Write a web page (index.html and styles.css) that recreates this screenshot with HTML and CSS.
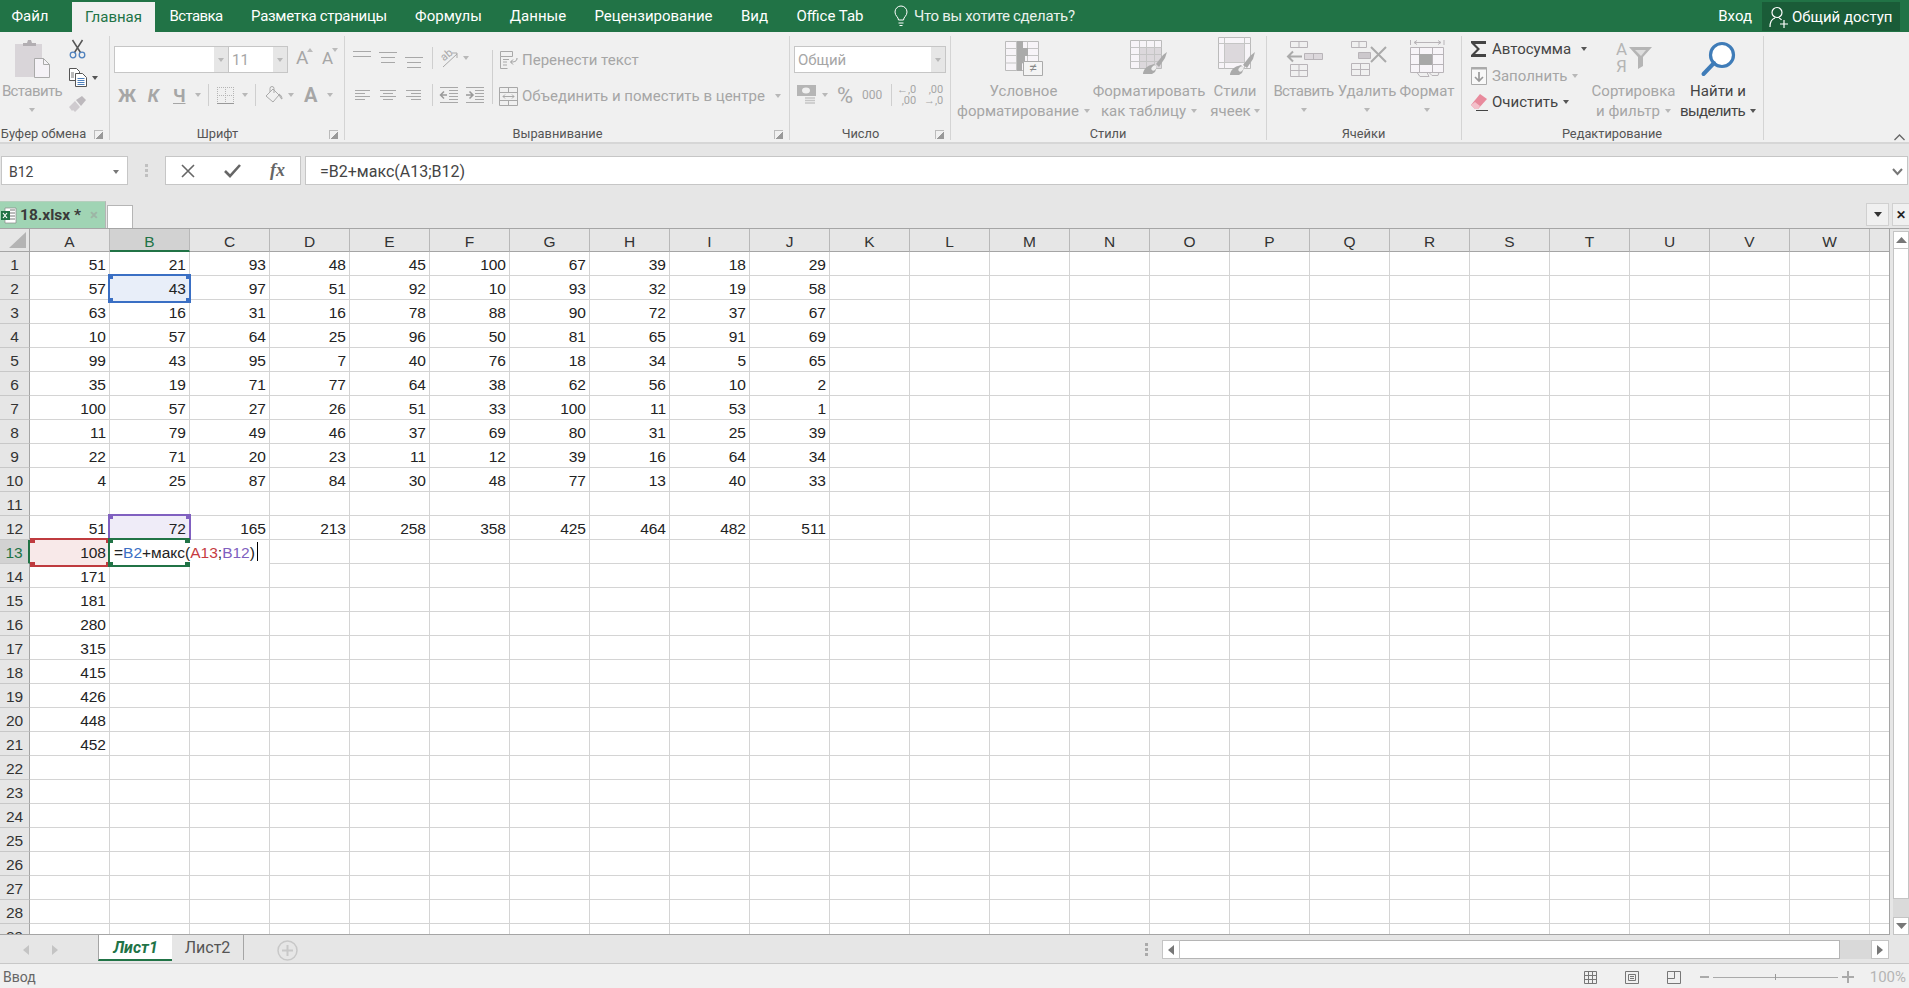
FILE: index.html
```html
<!DOCTYPE html>
<html lang="ru">
<head>
    <meta charset="UTF-8">
    <title>18.xlsx - Excel</title>
    <link rel="stylesheet" href="styles.css">
</head>
<body>
    <!-- top tabs -->
    <div class="titlebar">
        <div class="tabs">
            <div class="tab t-file">Файл</div>
            <div class="tab active">Главная</div>
            <div class="tab tight">Вставка</div>
            <div class="tab tight soft">Разметка страницы</div>
            <div class="tab">Формулы</div>
            <div class="tab">Данные</div>
            <div class="tab">Рецензирование</div>
            <div class="tab">Вид</div>
            <div class="tab">Office Tab</div>
        </div>
        <div class="tell">
            <svg width="14" height="21" viewBox="0 0 14 21" fill="none" stroke="#fff"><path d="M4.5 14c0-3-3.500-4-3.500-8a6 6 0 0 1 12 0c0 4-3.500 5-3.500 8z"/><path d="M4.500 17h5M5.500 19.500h3"/></svg>
            <span>Что вы хотите сделать?</span>
        </div>
        <div class="login">Вход</div>
        <div class="share">
            <svg width="20" height="22" viewBox="0 0 20 22" fill="none" stroke="#fff" stroke-width="1.200"><circle cx="8" cy="6.500" r="5"/><path d="M1 21c0-5 2-8 5-9M10 12c1 .3 2 1 2.500 2M11 18h8M15 14v8"/></svg>
            <span>Общий доступ</span>
        </div>
    </div>

    <!-- ribbon -->
    <div class="ribbon">
        <div class="grp g-clip">
            <div class="grp-body">
                <div class="big b-paste">
                    <div class="big-icon">
                        <svg width="35" height="38" viewBox="0 0 35 38"><rect x="0" y="4" width="27" height="33" fill="#d9d5d9"/><path d="M8 6V3h4l1-3h3l1 3h4v3z" fill="#b2aeb2"/><path d="M19.500 18.500h9l6 6v13h-15z" fill="#f5f2f7" stroke="#aaa"/><path d="M28.500 18.500v6h6" fill="none" stroke="#aaa"/></svg>
                    </div>
                    <div class="big-text off tight">Вставить</div>
                    <i class="caret low"></i>
                </div>
                <div class="clip-tools">
                    <svg width="17" height="19" viewBox="0 0 17 19" fill="none"><path d="M3.500 0l8 12.500M13.500 0l-8 12.500" stroke="#555" stroke-width="1.500"/><circle cx="4" cy="15" r="2.800" stroke="#4f81bd" stroke-width="1.300"/><circle cx="13" cy="15" r="2.800" stroke="#4f81bd" stroke-width="1.300"/></svg>
                    <div class="clip-copy">
                        <svg width="18" height="19" viewBox="0 0 18 19" fill="#fff" stroke="#555"><path d="M.5.5h7l3 3v9h-10z"/><path d="M6.500 5.500h7l4 4v9h-11z"/><path d="M8.500 10.500h7M8.500 12.500h7" stroke="#4f81bd"/><path d="M8.500 14.500h7M8.500 16.500h7" stroke="#4f81bd"/><path d="M2 5h3M2 7h3M2 9h3" stroke="#777"/></svg>
                        <i class="caret dark ml5"></i>
                    </div>
                    <svg width="18" height="17" viewBox="0 0 18 17"><path d="M0 11l6-6 5 6-5 5-2-2-1 1z" fill="#cfcbcf"/><path d="M7 4l6-4 4 4-5 6z" fill="#bdb9bd"/></svg>
                </div>
            </div>
            <div class="grp-label"><span>Буфер обмена</span><i class="launcher"></i></div>
        </div>

        <div class="grp g-font">
            <div class="grp-body col">
                <div class="r1 pl4">
                    <div class="combo c-name"><div class="combo-text"></div><div class="combo-btn"><i class="caret"></i></div></div>
                    <div class="combo c-size"><div class="combo-text off">11</div><div class="combo-btn"><i class="caret"></i></div></div>
                    <div class="a-size ml8"><span>A</span><svg width="6" height="4"><path d="M0 4h6L3 0z" fill="#bbb"/></svg></div>
                    <div class="a-size small ml9"><span>A</span><svg width="6" height="4"><path d="M0 0h6L3 4z" fill="#bbb"/></svg></div>
                </div>
                <div class="r2">
                    <span class="fmt w18 ml8">Ж</span>
                    <span class="fmt it w13 ml11">К</span>
                    <span class="fmt un w12 ml13">Ч</span>
                    <i class="caret ml10"></i>
                    <i class="sep ml7"></i>
                    <svg class="ml8" width="17" height="17" viewBox="0 0 17 17" fill="none" stroke="#b5b5b5" stroke-dasharray="1 1"><path d="M.5 0v17M8.500 0v17M16.500 0v17M0 .5h17M0 8.500h17"/><path d="M0 16.500h17" stroke-dasharray="none" stroke="#999"/></svg>
                    <i class="caret ml8"></i>
                    <i class="sep ml7"></i>
                    <svg class="ml9" width="18" height="18" viewBox="0 0 18 18" fill="none" stroke="#aaa"><path d="M1 10l7-7 6 6-6 7z"/><path d="M5 6V2.500a2 2 0 0 1 4 0V7"/><path d="M14 8c2 1 3 3 3 5-1 0-2-2-3-5z" fill="#ccc"/></svg>
                    <i class="caret ml5"></i>
                    <span class="fmt big-a w13 ml10">A</span>
                    <i class="caret ml10"></i>
                </div>
            </div>
            <div class="grp-label"><span>Шрифт</span><i class="launcher"></i></div>
        </div>

        <div class="grp g-align">
            <div class="grp-body">
                <div class="al-left">
                    <div class="r1">
                        <svg class="ml8 up8" width="18" height="8" viewBox="0 0 18 8" stroke="#a8a8a8"><path d="M0 .5h18M0 5.500h18"/></svg>
                        <svg class="ml8" width="18" height="12" viewBox="0 0 18 12" stroke="#a8a8a8"><path d="M0 .5h18M2 5.500h14M2 10.500h14"/></svg>
                        <svg class="ml8 low6" width="18" height="12" viewBox="0 0 18 12" stroke="#a8a8a8"><path d="M0 .5h18M2 5.500h14M2 10.500h14"/></svg>
                        <i class="sep ml9"></i>
                        <svg class="ml7" width="18" height="20" viewBox="0 0 18 20" fill="none" stroke="#a8a8a8"><text x="1" y="11" font-size="11" font-family="Roboto" fill="#a8a8a8" stroke="none" transform="rotate(-40 6 8)">ab</text><path d="M3 19L17 6M12 5h5v5"/></svg>
                        <i class="caret ml5"></i>
                    </div>
                    <div class="r2">
                        <svg class="ml10" width="15" height="10" viewBox="0 0 15 10" stroke="#a8a8a8"><path d="M0 .5h15M0 3.500h10M0 6.500h15M0 9.500h10"/></svg>
                        <svg class="ml10" width="16" height="10" viewBox="0 0 16 10" stroke="#a8a8a8"><path d="M0 .5h16M3 3.500h10M0 6.500h16M3 9.500h10"/></svg>
                        <svg class="ml10" width="15" height="10" viewBox="0 0 15 10" stroke="#a8a8a8"><path d="M0 .5h15M5 3.500h10M0 6.500h15M5 9.500h10"/></svg>
                        <i class="sep ml11"></i>
                        <svg class="ml7" width="18" height="16" viewBox="0 0 18 16" fill="none" stroke="#a8a8a8"><path d="M0 .5h18M9 3.500h9M9 6.500h9M9 9.500h9M9 12.500h9M0 15.500h18"/><path d="M7 8H1M4 4.500L.5 8 4 11.500" stroke="#999" stroke-width="1.500"/></svg>
                        <svg class="ml8" width="18" height="16" viewBox="0 0 18 16" fill="none" stroke="#a8a8a8"><path d="M0 .5h18M9 3.500h9M9 6.500h9M9 9.500h9M9 12.500h9M0 15.500h18"/><path d="M0 8h6M3.500 4.500L7 8l-3.500 3.500" stroke="#999" stroke-width="1.500"/></svg>
                    </div>
                </div>
                <i class="sep tall"></i>
                <div class="al-right">
                    <div class="r1 off wrap-row">
                        <svg class="ml7" width="18" height="18" viewBox="0 0 18 18" fill="none" stroke="#a8a8a8"><path d="M.5.5h12v5H.5zM.5 5.500v12h7M3 8.500h6M3 11h4M3 14h4"/><path d="M17 7c0 3-2 4-6 4M13 8.500L10.500 11l2.500 2.500" stroke="#999"/></svg>
                        <span class="ml4">Перенести текст</span>
                    </div>
                    <div class="r2 off merge-row">
                        <svg class="ml6" width="19" height="19" viewBox="0 0 19 19" fill="none" stroke="#a8a8a8"><path d="M.5.5h18v18H.5zM.5 5.500h18M.5 13.500h18M9.500.5v5M9.500 13.500v5"/><path d="M4 9.500h11M6 7.500l-2 2 2 2M13 7.500l2 2-2 2"/></svg>
                        <span class="ml4">Объединить и поместить в центре</span>
                        <i class="caret ml10"></i>
                    </div>
                </div>
            </div>
            <div class="grp-label"><span>Выравнивание</span><i class="launcher"></i></div>
        </div>

        <div class="grp g-num">
            <div class="grp-body col">
                <div class="r1 pl4">
                    <div class="combo c-num"><div class="combo-text off">Общий</div><div class="combo-btn"><i class="caret"></i></div></div>
                </div>
                <div class="r2">
                    <svg class="ml7" width="20" height="20" viewBox="0 0 20 20"><rect x="0" y="0" width="19" height="11" fill="#b5b5b5"/><ellipse cx="9" cy="5.500" rx="4" ry="3" fill="#f0f0f0"/><path d="M8 13h10M8 15.500h10M8 18h10" stroke="#c5c5c5" stroke-width="1.500"/></svg>
                    <i class="caret ml5"></i>
                    <span class="pct ml9">%</span>
                    <span class="thou ml10">000</span>
                    <i class="sep ml9"></i>
                    <span class="dec ml8"><span>←,0</span><span>,00</span></span>
                    <span class="dec ml11"><span>,00</span><span>→,0</span></span>
                </div>
            </div>
            <div class="grp-label"><span>Число</span><i class="launcher"></i></div>
        </div>

        <div class="grp g-styles">
            <div class="grp-body">
                <div class="big b-cond">
                    <div class="big-icon">
                        <svg width="38" height="35" viewBox="0 0 38 35" fill="none"><path d="M.5.500h33v29H.5z" fill="#f7f4f8" stroke="#bbb"/><path d="M.5 7.500h33M.5 14.500h33M.5 22h33M11.500.5v29M22.500.5v29" stroke="#c5c5c5"/><path d="M12 0h6v7h-6zM12 7h11v8H12zM12 15h8v7h-8zM12 22h5v8h-5z" fill="#aaa"/><path d="M18.500 20.500h19v14h-19z" fill="#f4f4f4" stroke="#aaa"/><text x="24" y="32" font-size="15" font-family="Roboto" fill="#888">≠</text></svg>
                    </div>
                    <div class="big-text off">Условное</div>
                    <div class="big-text off">форматирование<i class="caret ml5"></i></div>
                </div>
                <div class="big b-table">
                    <div class="big-icon">
                        <svg class="up1" width="38" height="35" viewBox="0 0 38 35" fill="none"><path d="M.5.500h31v28H.5z" fill="#f7f4f8" stroke="#bbb"/><path d="M9 7h22v21H9z" fill="#dcd8dc"/><path d="M.5 7.500h31M.5 14.500h31M.5 21.500h31M9.500.5v28M16.500.5v28M24.500.5v28" stroke="#c5c5c5"/><path d="M13 34c0-3 3-8 8-9l3-1 3 3-2 5-3 2z" fill="#aaa"/><path d="M26 24l7-9 4-3-2 6-6 9z" fill="#aaa"/><ellipse cx="24" cy="28" rx="3" ry="2" fill="#eee" transform="rotate(-45 24 28)"/></svg>
                    </div>
                    <div class="big-text off">Форматировать</div>
                    <div class="big-text off">как таблицу<i class="caret ml5"></i></div>
                </div>
                <div class="big b-cell">
                    <div class="big-icon">
                        <svg class="up3 ml3" width="38" height="38" viewBox="0 0 38 38" fill="none"><path d="M.5.500h32v31H.5z" fill="#f7f4f8" stroke="#bbb"/><path d="M6 7h21v18H6z" fill="#dcd8dc"/><path d="M.5 6.500h32M.5 25.500h32M6.500.5v31M26.500.5v31" stroke="#c5c5c5"/><path d="M12 38c0-3 3-8 8-9l3-1 3 3-2 5-3 2z" fill="#aaa"/><path d="M25 28l7-9 5-4-2 7-6 9z" fill="#aaa"/><ellipse cx="23" cy="32" rx="3" ry="2" fill="#eee" transform="rotate(-45 23 32)"/></svg>
                    </div>
                    <div class="big-text off">Стили</div>
                    <div class="big-text off">ячеек<i class="caret ml3"></i></div>
                </div>
            </div>
            <div class="grp-label"><span>Стили</span></div>
        </div>

        <div class="grp g-cells">
            <div class="grp-body">
                <div class="big b-ins">
                    <div class="big-icon">
                        <svg class="ml3" width="36" height="36" viewBox="0 0 36 36" fill="none" stroke="#b8b4b8"><path d="M3.500.5h17v6h-17zM12 .5v6M3.500 23.500h17v12h-17zM12 23.500v12M3.500 29.500h17"/><path d="M17.500 12.500h18v6h-18zM26.500 12.500v6" fill="#dcd8dc"/><path d="M15 15.500H1M6 10.500l-5 5 5 5" stroke="#aaa" stroke-width="2"/></svg>
                    </div>
                    <div class="big-text off tight">Вставить</div>
                    <i class="caret low"></i>
                </div>
                <div class="big b-del">
                    <div class="big-icon">
                        <svg class="ml3" width="36" height="36" viewBox="0 0 36 36" fill="none" stroke="#b8b4b8"><path d="M.5.500h15v6H.5zM8 .5v6M.5 22.500h18v12H.5zM9.500 22.500v12M.5 28.500h18"/><path d="M7.500 11.500h12v6h-12z" fill="#ccc8cc"/><path d="M20 6l15 15M35 6L20 21" stroke="#aaa" stroke-width="2"/></svg>
                    </div>
                    <div class="big-text off">Удалить</div>
                    <i class="caret low"></i>
                </div>
                <div class="big b-fmt">
                    <div class="big-icon">
                        <svg width="35" height="38" viewBox="0 0 35 38" fill="none" stroke="#b8b4b8"><path d="M.5 0v5M34 0v5M4 2.500h27M4 2.500l3-2M4 2.500l3 2M31 2.500l-3-2M31 2.500l-3 2"/><path d="M.5 7.500h33v25H.5z" fill="#f7f4f8"/><path d="M.5 14.500h33M.5 24.500h33M9.500 7.500v25M22.500 7.500v25"/><path d="M9 14h13v11H9z" fill="#a8a8a8" stroke="none"/><path d="M7 32.500l3 4h9l-2-4M19 32.500l3 3h6l1-3"/></svg>
                    </div>
                    <div class="big-text off">Формат</div>
                    <i class="caret low"></i>
                </div>
            </div>
            <div class="grp-label"><span>Ячейки</span></div>
        </div>

        <div class="grp g-edit">
            <div class="grp-body">
                <div class="edit-col">
                    <div class="edit-row">
                        <svg width="16" height="16" viewBox="0 0 16 16"><path d="M0 0h15v3H4l5 5-5 5h11v3H0v-2l6-6-6-6z" fill="#444"/></svg>
                        <span class="ml5">Автосумма</span><i class="caret dark ml10"></i>
                    </div>
                    <div class="edit-row off">
                        <svg width="16" height="18" viewBox="0 0 16 18" fill="none" stroke="#aaa"><path d="M.5.5h15v17H.5z" fill="#f8f8f8"/><path d="M0 1.500h16" stroke-width="2"/><path d="M8 5v9M4 10l4 4 4-4" stroke-width="1.700" stroke="#999"/></svg>
                        <span class="ml5">Заполнить</span><i class="caret ml4"></i>
                    </div>
                    <div class="edit-row">
                        <svg width="17" height="18" viewBox="0 0 17 18"><path d="M0 12L9 1l7 5-9 10H4z" fill="#e88a9c"/><path d="M0 12l4 4h3l2-3-5-4z" fill="#f3c0ca"/><path d="M5 17.500h12" stroke="#444"/></svg>
                        <span class="ml4">Очистить</span><i class="caret dark ml5"></i>
                    </div>
                </div>
                <div class="big b-sort">
                    <div class="big-icon">
                        <svg class="up2" width="36" height="32" viewBox="0 0 36 32"><text x="0" y="14" font-size="17" font-family="Roboto" fill="#b5b5b5">A</text><text x="0" y="31" font-size="17" font-family="Roboto" fill="#b5b5b5">Я</text><path d="M13 6h23l-9 10v9l-5 3V16z" fill="#b5b5b5"/><path d="M19 9h11l-5 6z" fill="#ddd"/></svg>
                    </div>
                    <div class="big-text off">Сортировка</div>
                    <div class="big-text off">и фильтр<i class="caret ml5"></i></div>
                </div>
                <div class="big b-find">
                    <div class="big-icon">
                        <svg width="35" height="36" viewBox="0 0 35 36" fill="none"><circle cx="21" cy="14" r="11.500" stroke="#3f7cb8" stroke-width="3.200" fill="#fff"/><path d="M2.500 33L13 22" stroke="#3f7cb8" stroke-width="4" stroke-linecap="round"/></svg>
                    </div>
                    <div class="big-text">Найти и</div>
                    <div class="big-text tight">выделить<i class="caret dark ml5"></i></div>
                </div>
            </div>
            <div class="grp-label"><span>Редактирование</span></div>
        </div>

        <div class="ribbon-end">
            <svg width="11" height="7" viewBox="0 0 11 7" fill="none" stroke="#666" stroke-width="1.300"><path d="M.5 6l5-5 5 5"/></svg>
        </div>
    </div>

    <div class="gapbar"></div>

    <!-- formula bar -->
    <div class="formula">
        <div class="namebox"><span>B12</span><i class="caret mid"></i></div>
        <div class="grip"><i></i><i></i><i></i></div>
        <div class="fx-tools">
            <svg width="14" height="14" viewBox="0 0 14 14" stroke="#666" stroke-width="1.600"><path d="M1 1l12 12M13 1L1 13"/></svg>
            <svg width="17" height="14" viewBox="0 0 17 14" fill="none" stroke="#666" stroke-width="2.600"><path d="M1 7l5 5L16 1"/></svg>
            <span class="fx">fx</span>
        </div>
        <div class="fx-input">
            <span>=B2+макс(A13;B12)</span>
            <svg width="11" height="8" viewBox="0 0 11 8" fill="none" stroke="#777" stroke-width="2"><path d="M1 1l4.500 5L10 1"/></svg>
        </div>
    </div>

    <!-- Office Tab strip -->
    <div class="docbar">
        <div class="doc-tab">
            <svg width="15" height="17" viewBox="0 0 15 17"><path d="M4 1h11v15H4z" fill="#fff" stroke="#888" stroke-width=".7"/><path d="M9 3h5M9 6h5M9 9h5M9 12h5" stroke="#777"/><rect x="0" y="4" width="9" height="9" fill="#217346"/><path d="M2 6l4 5M6 6l-4 5" stroke="#fff" stroke-width="1.200"/></svg>
            <span class="doc-name">18.xlsx *</span>
            <span class="doc-x">×</span>
        </div>
        <div class="doc-new"></div>
        <div class="doc-end">
            <div class="doc-btn"><i class="caret solid"></i></div>
            <div class="doc-btn narrow">✕</div>
        </div>
    </div>

    <!-- sheet -->
    <div class="sheet-wrap">
        <div class="sheet">
            <div class="head">
                <div class="corner"><svg width="17" height="16"><path d="M17 0v16H0z" fill="#b4b4b4"/></svg></div>
                <div>A</div><div class="hl">B</div><div>C</div><div>D</div><div>E</div><div>F</div><div>G</div><div>H</div><div>I</div><div>J</div><div>K</div><div>L</div><div>M</div><div>N</div><div>O</div><div>P</div><div>Q</div><div>R</div><div>S</div><div>T</div><div>U</div><div>V</div><div>W</div><div></div>
            </div>
            <div class="row"><div class="rh">1</div><div>51</div><div>21</div><div>93</div><div>48</div><div>45</div><div>100</div><div>67</div><div>39</div><div>18</div><div>29</div></div>
            <div class="row"><div class="rh">2</div><div>57</div><div class="ref blue">43<i></i></div><div>97</div><div>51</div><div>92</div><div>10</div><div>93</div><div>32</div><div>19</div><div>58</div></div>
            <div class="row"><div class="rh">3</div><div>63</div><div>16</div><div>31</div><div>16</div><div>78</div><div>88</div><div>90</div><div>72</div><div>37</div><div>67</div></div>
            <div class="row"><div class="rh">4</div><div>10</div><div>57</div><div>64</div><div>25</div><div>96</div><div>50</div><div>81</div><div>65</div><div>91</div><div>69</div></div>
            <div class="row"><div class="rh">5</div><div>99</div><div>43</div><div>95</div><div>7</div><div>40</div><div>76</div><div>18</div><div>34</div><div>5</div><div>65</div></div>
            <div class="row"><div class="rh">6</div><div>35</div><div>19</div><div>71</div><div>77</div><div>64</div><div>38</div><div>62</div><div>56</div><div>10</div><div>2</div></div>
            <div class="row"><div class="rh">7</div><div>100</div><div>57</div><div>27</div><div>26</div><div>51</div><div>33</div><div>100</div><div>11</div><div>53</div><div>1</div></div>
            <div class="row"><div class="rh">8</div><div>11</div><div>79</div><div>49</div><div>46</div><div>37</div><div>69</div><div>80</div><div>31</div><div>25</div><div>39</div></div>
            <div class="row"><div class="rh">9</div><div>22</div><div>71</div><div>20</div><div>23</div><div>11</div><div>12</div><div>39</div><div>16</div><div>64</div><div>34</div></div>
            <div class="row"><div class="rh">10</div><div>4</div><div>25</div><div>87</div><div>84</div><div>30</div><div>48</div><div>77</div><div>13</div><div>40</div><div>33</div></div>
            <div class="row"><div class="rh">11</div></div>
            <div class="row"><div class="rh">12</div><div>51</div><div class="ref purple">72<i></i></div><div>165</div><div>213</div><div>258</div><div>358</div><div>425</div><div>464</div><div>482</div><div>511</div></div>
            <div class="row"><div class="rh sel">13</div><div class="ref red">108<i></i></div><div class="edit-cell"><b class="ref-box"></b>=<span class="c-blue">B2</span>+макс(<span class="c-red">A13</span>;<span class="c-purple">B12</span>)<u class="cursor"></u></div></div>
            <div class="row"><div class="rh">14</div><div>171</div></div>
            <div class="row"><div class="rh">15</div><div>181</div></div>
            <div class="row"><div class="rh">16</div><div>280</div></div>
            <div class="row"><div class="rh">17</div><div>315</div></div>
            <div class="row"><div class="rh">18</div><div>415</div></div>
            <div class="row"><div class="rh">19</div><div>426</div></div>
            <div class="row"><div class="rh">20</div><div>448</div></div>
            <div class="row"><div class="rh">21</div><div>452</div></div>
            <div class="row"><div class="rh">22</div></div>
            <div class="row"><div class="rh">23</div></div>
            <div class="row"><div class="rh">24</div></div>
            <div class="row"><div class="rh">25</div></div>
            <div class="row"><div class="rh">26</div></div>
            <div class="row"><div class="rh">27</div></div>
            <div class="row"><div class="rh">28</div></div>
            <div class="row"><div class="rh">29</div></div>
        </div>
        <div class="vscroll">
            <div class="sb-btn"><svg width="11" height="6"><path d="M0 6h11L5.500 0z" fill="#777"/></svg></div>
            <div class="v-thumb"></div>
            <div class="v-track"></div>
            <div class="sb-btn"><svg width="11" height="6"><path d="M0 0h11L5.500 6z" fill="#777"/></svg></div>
        </div>
    </div>

    <!-- sheet tabs -->
    <div class="sheetbar">
        <div class="nav">
            <svg width="6" height="10"><path d="M6 0v10L0 5z" fill="#c4c4c4"/></svg>
            <svg width="6" height="10"><path d="M0 0v10l6-5z" fill="#c4c4c4"/></svg>
        </div>
        <div class="s-tab on">Лист1</div>
        <div class="s-tab">Лист2</div>
        <svg class="s-add" width="21" height="21" viewBox="0 0 21 21" fill="none" stroke="#c8c8c8" stroke-width="1.500"><circle cx="10.500" cy="10.500" r="9.500"/><path d="M10.500 5v11M5 10.500h11" stroke-width="2"/></svg>
        <div class="hscroll">
            <div class="h-dots"><i></i><i></i><i></i></div>
            <div class="sb-btn h"><svg width="6" height="10"><path d="M6 0v10L0 5z" fill="#777"/></svg></div>
            <div class="h-thumb"></div>
            <div class="h-track"></div>
            <div class="sb-btn h"><svg width="6" height="10"><path d="M0 0v10l6-5z" fill="#777"/></svg></div>
        </div>
    </div>

    <!-- status bar -->
    <div class="status">
        <span class="st-mode">Ввод</span>
        <div class="st-views">
            <svg width="13" height="13" viewBox="0 0 13 13" fill="none" stroke="#777"><path d="M.5.500h12v12H.5zM.5 4.500h12M.5 8.500h12M4.500.5v12M8.500.5v12"/></svg>
            <svg width="14" height="13" viewBox="0 0 14 13" fill="none" stroke="#777"><path d="M.5.500h13v12H.5zM3.500 3.500h7v6h-7zM5 5.500h4M5 7.500h4"/></svg>
            <svg width="14" height="13" viewBox="0 0 14 13" fill="none" stroke="#777"><path d="M.5.500h13v12H.5zM.5 7.500h7M7.500.5v7"/></svg>
        </div>
        <div class="st-zoom">
            <svg width="9" height="3"><path d="M0 0h9v2H0z" fill="#aaa"/></svg>
            <div class="slider"><i></i></div>
            <svg width="12" height="12" viewBox="0 0 12 12"><path d="M5 0h2v5h5v2H7v5H5V7H0V5h5z" fill="#aaa"/></svg>
            <span class="st-pct">100%</span>
        </div>
    </div>
</body>
</html>
```

FILE: styles.css
```css
html, body {
    margin: 0;
    padding: 0;
    height: 100%;
}
body {
    width: 1909px;
    height: 988px;
    overflow: hidden;
    display: flex;
    flex-direction: column;
    background-color: #e6e6e6;
    font-family: Roboto, "Liberation Sans", sans-serif;
    font-size: 15px;
    color: #444;
}
svg {
    display: block;
    flex: none;
    overflow: visible;
}
i, b, u {
    display: block;
    font-style: normal;
}

/* spacing helpers */
.ml3 { margin-left: 3px; }
.ml4 { margin-left: 4px; }
.ml5 { margin-left: 5px; }
.ml6 { margin-left: 6px; }
.ml7 { margin-left: 7px; }
.ml8 { margin-left: 8px; }
.ml9 { margin-left: 9px; }
.ml10 { margin-left: 10px; }
.ml11 { margin-left: 11px; }
.ml13 { margin-left: 13px; }
.pl4 { padding-left: 4px; }
.up1 { margin-top: -2px; }
.up2 { margin-top: -4px; }
.up3 { margin-top: -5px; }
.up8 { margin-top: -6px; }
.low6 { margin-top: 10px; }
.tight { letter-spacing: -.6px; }
.tight.soft { letter-spacing: -.3px; }

/* title bar */
.titlebar {
    flex: none;
    height: 32px;
    display: flex;
    background-color: #217346;
    color: #fff;
}
.tabs {
    display: grid;
    grid-template-columns: 72px 84px 82px 164px 95px 84px 147px 55px 96px;
}
.tab {
    margin-right: 2px;
    text-align: center;
    line-height: 33px;
    white-space: nowrap;
}
.t-file {
    margin-right: 12px;
}
.tab.active {
    margin-right: 1px;
    margin-top: 2px;
    line-height: 30px;
    background-color: #f0f0f0;
    color: #217346;
}
.tell {
    display: flex;
    align-items: center;
    margin-left: 15px;
    color: #e9f1ec;
}
.tell span {
    margin-left: 6px;
    letter-spacing: -.3px;
}
.login {
    margin-left: auto;
    line-height: 33px;
}
.share {
    display: flex;
    align-items: center;
    width: 138px;
    box-sizing: border-box;
    height: 29px;
    margin: 2px 9px 0 10px;
    padding-left: 7px;
    background-color: #1a5c38;
}
.share span {
    margin-left: 3px;
}

/* ribbon */
.ribbon {
    flex: none;
    height: 112px;
    box-sizing: border-box;
    padding-top: 4px;
    display: flex;
    align-items: flex-start;
    background-color: #f0f0f0;
    border-bottom: 2px solid #d6d6d6;
}
.grp {
    flex: none;
    height: 104px;
    box-sizing: border-box;
    border-right: 1px solid #d4d4d4;
}
.g-clip { width: 110px; }
.g-font { width: 235px; }
.g-align { width: 445px; }
.g-num { width: 161px; }
.g-styles { width: 316px; }
.g-cells { width: 195px; }
.g-edit { width: 302px; }
.grp-body {
    height: 88px;
    display: flex;
}
.grp-body.col {
    flex-direction: column;
}
.grp-label {
    height: 16px;
    line-height: 20px;
    font-size: 12.800px;
    display: flex;
    align-items: flex-start;
    color: #555;
    white-space: nowrap;
}
.grp-label span {
    flex: 1;
    text-align: center;
    margin-left: -1px;
}
.g-clip .grp-label span {
    margin-left: -4px;
}
.launcher {
    flex: none;
    width: 8px;
    height: 8px;
    margin: 6px 6px 0 3px;
    border-left: 1px solid #bbb;
    border-top: 1px solid #bbb;
    background: linear-gradient(135deg, transparent 55%, #999 55%);
}
.r1 {
    height: 44px;
    display: flex;
    align-items: center;
}
.r2 {
    height: 30px;
    display: flex;
    align-items: center;
}
.off {
    color: #a6a6a6;
}
.sep {
    flex: none;
    width: 1px;
    height: 22px;
    background-color: #cfcfcf;
}
.sep.tall {
    height: 54px;
    margin-top: 14px;
}
.caret {
    flex: none;
    width: 0;
    height: 0;
    border-left: 3.5px solid transparent;
    border-right: 3.5px solid transparent;
    border-top: 4px solid #b8b8b8;
}
.caret.dark {
    border-top-color: #555;
}
.caret.low {
    margin-top: 7px;
}
.caret.mid {
    border-top-color: #777;
}
.caret.solid {
    border-left-width: 4px;
    border-right-width: 4px;
    border-top: 5px solid #333;
}

/* big ribbon buttons */
.big {
    flex: none;
    display: flex;
    flex-direction: column;
    align-items: center;
}
.big-icon {
    height: 45px;
    display: flex;
    align-items: center;
}
.big-text {
    height: 20px;
    line-height: 20px;
    display: flex;
    align-items: center;
    white-space: nowrap;
}
.b-paste { width: 64px; }
.b-cond { width: 133px; margin-left: 6px; }
.b-table { width: 114px; margin-left: 2px; }
.b-cell { width: 54px; margin-left: 2px; }
.b-ins { width: 67px; margin-left: 3px; }
.b-del { width: 60px; }
.b-fmt { width: 60px; }
.b-sort { width: 97px; margin-left: -5px; }
.b-find { width: 72px; }

/* clipboard */
.clip-tools {
    margin: 4px 0 0 5px;
    display: flex;
    flex-direction: column;
    gap: 9px;
}
.clip-copy {
    display: flex;
    align-items: center;
    width: 30px;
}

/* combo boxes */
.combo {
    display: flex;
    height: 27px;
    box-sizing: border-box;
    background-color: #fff;
    border: 1px solid #c6c6c6;
    margin-top: 3px;
}
.combo-text {
    flex: 1;
    line-height: 27px;
    padding-left: 3px;
}
.combo-btn {
    width: 14px;
    display: flex;
    align-items: center;
    justify-content: center;
    background-color: #e6e6e6;
}
.c-name { width: 115px; }
.c-size { width: 60px; margin-left: -1px; }
.c-num { width: 152px; }
.a-size {
    display: flex;
    align-items: flex-start;
    width: 17px;
    color: #a6a6a6;
    font-size: 19px;
    line-height: 22px;
}
.a-size svg {
    margin-top: 1px;
    margin-left: -1px;
}
.a-size.small {
    font-size: 17px;
}

/* font buttons */
.fmt {
    flex: none;
    text-align: center;
    font-weight: 700;
    font-size: 18px;
    color: #a6a6a6;
}
.fmt.it { font-style: italic; }
.fmt.un { text-decoration: underline; }
.fmt.big-a { font-size: 20px; }
.w12 { width: 12px; }
.w13 { width: 13px; }
.w18 { width: 18px; }

/* alignment */
.al-left {
    flex: none;
    width: 147px;
}
.al-right .r1,
.al-right .r2 {
    white-space: nowrap;
}
.wrap-row {
    padding-top: 4px;
    box-sizing: border-box;
}
.merge-row {
    padding-top: 2px;
    box-sizing: border-box;
}

/* number */
.pct {
    font-size: 22px;
    color: #a6a6a6;
    width: 15px;
    text-align: center;
}
.thou {
    font-size: 12px;
    color: #a6a6a6;
}
.dec {
    display: flex;
    flex-direction: column;
    font-size: 11px;
    line-height: 11px;
    color: #a6a6a6;
    align-items: flex-end;
    width: 16px;
}

/* editing */
.edit-col {
    width: 119px;
    padding-left: 9px;
    flex: none;
    display: flex;
    flex-direction: column;
}
.edit-row {
    height: 26.500px;
    display: flex;
    align-items: center;
}
.ribbon-end {
    flex: 1;
    height: 105px;
    display: flex;
    align-items: flex-end;
    justify-content: flex-end;
    padding-right: 4px;
    box-sizing: border-box;
}

/* formula bar */
.gapbar {
    flex: none;
    height: 12px;
}
.formula {
    flex: none;
    height: 30px;
    box-sizing: border-box;
    padding-bottom: 1px;
    display: flex;
}
.namebox {
    width: 127px;
    margin-left: 1px;
    box-sizing: border-box;
    display: flex;
    align-items: center;
    justify-content: space-between;
    padding: 2px 8px 0 7px;
    font-size: 14px;
    background-color: #fff;
    border: 1px solid #c6c6c6;
}
.grip {
    width: 37px;
    display: flex;
    flex-direction: column;
    align-items: center;
    justify-content: center;
    gap: 2px;
}
.grip i {
    width: 3px;
    height: 3px;
    background-color: #c0c0c0;
}
.fx-tools {
    width: 136px;
    box-sizing: border-box;
    display: flex;
    align-items: center;
    justify-content: space-between;
    padding: 0 15px;
    background-color: #fff;
    border: 1px solid #c6c6c6;
}
.fx {
    font-family: "Liberation Serif", serif;
    font-style: italic;
    font-weight: 700;
    font-size: 18px;
    color: #666;
}
.fx-input {
    flex: 1;
    margin: 0 1px 0 4px;
    display: flex;
    align-items: center;
    justify-content: space-between;
    padding: 2px 4px 0 14px;
    font-size: 16px;
    background-color: #fff;
    border: 1px solid #c6c6c6;
}

/* document tabs */
.docbar {
    flex: none;
    height: 43px;
    box-sizing: border-box;
    border-bottom: 1px solid #a5a5a5;
    display: flex;
    align-items: flex-end;
}
.doc-tab {
    width: 106px;
    height: 27px;
    box-sizing: border-box;
    display: flex;
    align-items: center;
    padding-left: 1px;
    background-color: #a0d4b4;
    border-right: 1px solid #b5b5b5;
    border-top: 1px solid #b5cfbd;
}
.doc-name {
    margin-left: 4px;
    font-weight: 700;
    font-size: 15.500px;
    color: #3a3a3a;
}
.doc-x {
    margin-left: 9px;
    font-weight: 700;
    font-size: 15px;
    color: #9db5a5;
}
.doc-new {
    width: 26px;
    height: 23px;
    margin-left: 1px;
    box-sizing: border-box;
    background-color: #fff;
    border: 1px solid #b5b5b5;
    border-bottom: 0;
}
.doc-end {
    margin-left: auto;
    display: flex;
    gap: 3px;
    margin-bottom: 2px;
}
.doc-btn {
    width: 23px;
    height: 23px;
    box-sizing: border-box;
    display: flex;
    align-items: center;
    justify-content: center;
    background-color: #f0f0f0;
    border: 1px solid #d0d0d0;
    font-size: 12px;
    font-weight: 700;
    color: #222;
}
.doc-btn.narrow {
    width: 17px;
    border-right: 0;
}

/* sheet */
.sheet-wrap {
    flex: none;
    height: 706px;
    display: flex;
}
.sheet {
    width: 1889px;
    overflow: hidden;
    background-color: #fff;
    border-right: 1px solid #a5a5a5;
    border-bottom: 1px solid #a5a5a5;
    box-sizing: content-box;
    height: 705px;
}
.head,
.row {
    display: grid;
    grid-template-columns: 30px repeat(24, 80px);
    font-family: "Liberation Sans", sans-serif;
    font-size: 15.500px;
    color: #222;
}
.head {
    height: 23px;
    background-color: #e6e6e6;
    color: #333;
}
.head > div {
    box-sizing: border-box;
    height: 23px;
    line-height: 25px;
    text-align: center;
    border-right: 1px solid #b8b8b8;
    border-bottom: 1px solid #a5a5a5;
}
.head .corner {
    display: flex;
    align-items: flex-end;
    justify-content: flex-end;
    padding: 0 3px 3px 0;
    border-right: 1px solid #a5a5a5;
}
.head .hl {
    background-color: #d2d2d2;
    color: #217346;
    border-bottom: 2px solid #217346;
}
.row {
    height: 24px;
    box-sizing: border-box;
    line-height: 26px;
    border-bottom: 1px solid #d4d4d4;
    background-image: linear-gradient(90deg, transparent 79px, #d4d4d4 79px);
    background-size: 80px 100%;
    background-position: 30px 0;
}
.row > div {
    text-align: right;
    padding-right: 4px;
    position: relative;
}
.row > .rh {
    box-sizing: border-box;
    height: 24px;
    padding: 0;
    text-align: center;
    color: #333;
    background-color: #e6e6e6;
    border-right: 1px solid #a5a5a5;
    border-bottom: 1px solid #c8c8c8;
}
.row > .rh.sel {
    background-color: #d2d2d2;
    color: #217346;
    border-right: 2px solid #217346;
}

/* formula references */
.ref {
    z-index: 1;
}
.ref.blue { --c: #3a6fc4; background-color: #e8eef9; }
.ref.purple { --c: #8060c0; background-color: #efecf8; }
.ref.red { --c: #bf3b3f; background-color: #f8e9e9; }
.ref i,
.ref-box {
    position: absolute;
    left: -2px;
    right: -1px;
    top: -2px;
    bottom: -1px;
    border: 2px solid var(--c);
    pointer-events: none;
    background:
        linear-gradient(var(--c), var(--c)) 0 0 / 5px 5px no-repeat,
        linear-gradient(var(--c), var(--c)) 100% 0 / 5px 5px no-repeat,
        linear-gradient(var(--c), var(--c)) 0 100% / 5px 5px no-repeat,
        linear-gradient(var(--c), var(--c)) 100% 100% / 5px 5px no-repeat;
    background-origin: border-box;
    background-clip: border-box;
}
.ref.red i {
    left: 0;
    border-left: 0;
    border-right: 0;
}
.row > .edit-cell {
    --c: #217346;
    grid-column: span 2;
    text-align: left;
    padding: 0 0 0 4px;
    background-color: #fff;
    display: flex;
    white-space: pre;
    z-index: 2;
    margin-right: 1px;
}
.ref-box {
    right: 79px;
    border-right: 0;
}
.c-blue { color: #3a6fc4; }
.c-red { color: #c63b3f; }
.c-purple { color: #8060c0; }
.cursor {
    width: 1px;
    height: 19px;
    margin: 2px 0 0 2px;
    background-color: #000;
}

/* scrollbars */
.vscroll {
    width: 19px;
    display: flex;
    flex-direction: column;
    align-items: flex-end;
}
.sb-btn {
    flex: none;
    width: 16px;
    height: 18px;
    box-sizing: border-box;
    display: flex;
    align-items: center;
    justify-content: center;
    background-color: #fff;
    border: 1px solid #c4c4c4;
}
.vscroll .sb-btn:first-child {
    margin-top: 2px;
}
.v-thumb {
    width: 16px;
    height: 650px;
    box-sizing: border-box;
    background-color: #fff;
    border: 1px solid #c4c4c4;
    border-top: 0;
}
.v-track {
    flex: 1;
    width: 16px;
    background-color: #dadada;
}

/* sheet tabs */
.sheetbar {
    flex: none;
    height: 29px;
    box-sizing: border-box;
    border-bottom: 1px solid #c8c8c8;
    display: flex;
    align-items: flex-start;
}
.nav {
    width: 98px;
    box-sizing: border-box;
    padding: 10px 0 0 23px;
    display: flex;
    gap: 23px;
}
.s-tab {
    width: 72px;
    height: 25px;
    box-sizing: border-box;
    text-align: center;
    line-height: 26px;
    font-size: 16px;
    color: #555;
    border-right: 1px solid #a5a5a5;
}
.s-tab.on {
    width: 74px;
    height: 26px;
    background-color: #fff;
    color: #217346;
    font-weight: 700;
    font-style: italic;
    border: 0;
    border-left: 1px solid #a5a5a5;
    border-bottom: 2px solid #217346;
}
.s-add {
    margin: 5px 0 0 33px;
}
.hscroll {
    margin-left: auto;
    margin-right: 20px;
    margin-top: 5px;
    display: flex;
    align-items: center;
}
.h-dots {
    display: flex;
    flex-direction: column;
    gap: 2px;
    margin-right: 14px;
}
.h-dots i {
    width: 3px;
    height: 3px;
    background-color: #aaa;
}
.sb-btn.h {
    width: 18px;
    height: 19px;
}
.h-thumb {
    width: 660px;
    height: 19px;
    box-sizing: border-box;
    background-color: #fff;
    border: 1px solid #b5b5b5;
    border-left: 0;
}
.h-track {
    width: 31px;
    height: 19px;
    background-color: #d9d9d9;
}

/* status bar */
.status {
    flex: none;
    height: 24px;
    box-sizing: border-box;
    display: flex;
    align-items: center;
    padding: 2px 0 0 3px;
    background-color: #f0f0f0;
    color: #666;
    font-size: 14px;
}
.st-views {
    margin-left: auto;
    display: flex;
    gap: 28px;
}
.st-zoom {
    margin-left: 19px;
    display: flex;
    align-items: center;
}
.slider {
    width: 125px;
    height: 1px;
    margin: 0 4px;
    background-color: #aaa;
    display: flex;
    justify-content: center;
}
.slider i {
    width: 1px;
    height: 6px;
    margin-top: -3px;
    background-color: #999;
}
.st-pct {
    margin: 0 3px 0 16px;
    color: #b5b5b5;
    font-size: 15px;
}
```
